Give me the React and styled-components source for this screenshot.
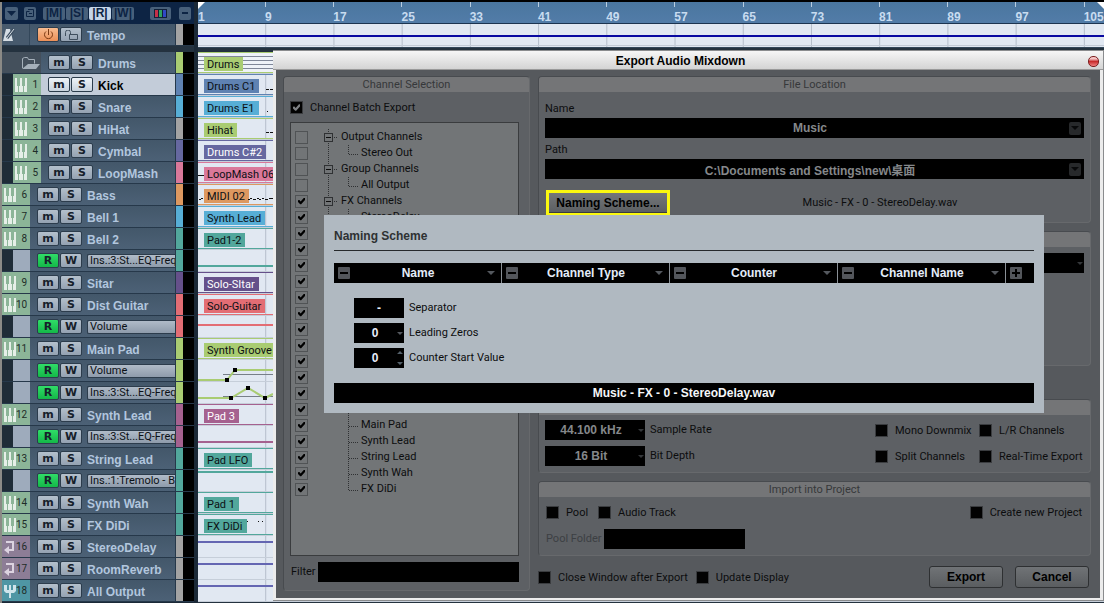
import React from "react";
import styled, { createGlobalStyle, css } from "styled-components";

const GREEN = "#a9cc72";
const BLUE = "#5f82b2";
const SKY = "#57aed6";
const GREY = "#a3a3a3";
const VIOLET = "#6668a0";
const PINK = "#d9789a";
const ORANGE = "#dd9860";
const TEAL = "#52a79c";
const PURPLE = "#65508a";
const RED = "#e36d74";
const MAUVE = "#a5618f";
const LINE = "#6466b2";

const tracks = [
  { kind: "folder", name: "Drums", color: GREEN, clip: "Drums", striped: true },
  { num: 1, name: "Kick", color: BLUE, clip: "Drums C1", indent: true, selected: true, notes: "M68 15.500h3M72 15.500h3" },
  { num: 2, name: "Snare", color: SKY, clip: "Drums E1", indent: true, notes: "M69 15.500h1" },
  { num: 3, name: "HiHat", color: GREY, tint: GREEN, clip: "Hihat", indent: true, notes: "M68 14.500h3M72 14.500h3" },
  { num: 4, name: "Cymbal", color: VIOLET, clip: "Drums C#2", indent: true, light: true },
  { num: 5, name: "LoopMash", color: PINK, clip: "LoopMash 06", indent: true, notes: "M0 13.500h6" },
  {
    num: 6,
    name: "Bass",
    color: ORANGE,
    clip: "MIDI 02",
    notes: "M1 15.500h2M3 14.500h2M50 15.500h2M52 14.500h2M55 15.500h3M59 14.500h2M61 15.500h2M64 14.500h2M67 15.500h3M71 14.500h4",
  },
  { num: 7, name: "Bell 1", color: SKY, clip: "Synth Lead" },
  { num: 8, name: "Bell 2", color: TEAL, clip: "Pad1-2" },
  { kind: "auto", param: "Ins.:3:St...EQ-Freq", color: TEAL, curve: "M0 16H906" },
  { num: 9, name: "Sitar", color: PURPLE, clip: "Solo-SItar", light: true },
  { num: 10, name: "Dist Guitar", color: RED, clip: "Solo-Guitar" },
  { kind: "auto", param: "Volume", color: RED, curve: "M0 9H906" },
  { num: 11, name: "Main Pad", color: GREEN, clip: "Synth Groove" },
  {
    kind: "auto",
    param: "Volume",
    color: GREEN,
    base: "M25 14.500H75",
    curve: "M0 20H29L37 10H75",
    points: [[29, 20], [37, 10]],
  },
  {
    kind: "auto",
    param: "Ins.:3:St...EQ-Freq",
    color: GREEN,
    base: "M25 14.500H75",
    curve: "M0 16H33L50 6L67 16L75 12",
    points: [[33, 16], [50, 6], [67, 16]],
  },
  { num: 12, name: "Synth Lead", color: MAUVE, clip: "Pad 3", light: true },
  { kind: "auto", param: "Ins.:3:St...EQ-Freq", color: MAUVE, curve: "M0 16H906" },
  { num: 13, name: "String Lead", color: TEAL, clip: "Pad LFO" },
  { kind: "auto", param: "Ins.:1:Tremolo - B", color: TEAL, curve: "M0 2H906" },
  { num: 14, name: "Synth Wah", color: TEAL, clip: "Pad 1" },
  { num: 15, name: "FX DiDi", color: TEAL, clip: "FX DiDi", notes: "M49 7.500h1M60 7.500h1M64 7.500h1" },
  { kind: "fx", num: 16, name: "StereoDelay", color: GREY, line: LINE, curve: "M0 6H906" },
  { kind: "fx", num: 17, name: "RoomReverb", color: GREY, line: LINE, curve: "M0 6H906" },
  { kind: "out", num: 18, name: "All Output", color: GREY, line: LINE, curve: "M0 6H906" },
];

const channels = [
  { name: "Output Channels", group: true, first: true },
  { name: "Stereo Out", last: true, trunk: true },
  { name: "Group Channels", group: true },
  { name: "All Output", last: true, trunk: true },
  { name: "FX Channels", group: true, on: true },
  { name: "StereoDelay", on: true, trunk: true },
  { name: "RoomReverb", on: true, last: true, trunk: true },
  { name: "Instrument Tracks", group: true, on: true, end: true },
  { name: "Kick", on: true },
  { name: "Snare", on: true },
  { name: "HiHat", on: true },
  { name: "Cymbal", on: true },
  { name: "LoopMash", on: true },
  { name: "Bass", on: true },
  { name: "Bell 1", on: true },
  { name: "Bell 2", on: true },
  { name: "Sitar", on: true },
  { name: "Dist Guitar", on: true },
  { name: "Main Pad", on: true },
  { name: "Synth Lead", on: true },
  { name: "String Lead", on: true },
  { name: "Synth Wah", on: true },
  { name: "FX DiDi", on: true, last: true },
];

const bars = [1, 9, 17, 25, 33, 41, 49, 57, 65, 73, 81, 89, 97, 105];
const nameParts = ["Name", "Channel Type", "Counter", "Channel Name"];

/* ---------- icons ---------- */

const KeysIcon = () => (
  <svg width="12" height="14" viewBox="0 0 12 14" fill="#e6efe8">
    <path d="M0 0h2v8h1v6H0zM5 0h2v8h1v6H4V8h1zM10 0h2v14H9V8h1z" />
  </svg>
);

const ReturnIcon = () => (
  <svg width="12" height="14" viewBox="0 0 12 14" fill="none" stroke="#dcd3e0" strokeWidth="2">
    <path d="M2 2h7v8H4" />
    <path d="M5 6v8L0 10z" fill="#dcd3e0" stroke="none" />
  </svg>
);

const OutIcon = () => (
  <svg width="12" height="14" viewBox="0 0 12 14" fill="#cfe4ea">
    <path d="M0 1h3v5h2V1h2v5h2V1h3v6l-2 2H7v5H5V9H2L0 7z" />
  </svg>
);

const FolderIcon = () => (
  <svg width="19" height="14" viewBox="0 0 19 14">
    <path d="M1.500 12V2.500l2-1h3l1 2h6v4" fill="none" stroke="#a5b0ba" />
    <path d="M1 13l6-5h12l-4 5z" fill="#a5b0ba" />
  </svg>
);

const MetronomeIcon = () => (
  <svg width="13" height="14" viewBox="0 0 13 14">
    <path d="M4 1h4l3 12H1z" fill="#d5dde4" />
    <path d="M5 10L12 1" stroke="#3c4e60" strokeWidth="3" />
    <path d="M5 10L12 1" stroke="#d5dde4" />
  </svg>
);

const PowerIcon = () => (
  <svg width="11" height="11" viewBox="0 0 11 11" fill="none" stroke="#7c3a14">
    <path d="M3 2.500a4 4 0 1 0 5 0M5.500 0v6" />
  </svg>
);

const LockIcon = () => (
  <svg width="15" height="10" viewBox="0 0 15 10" fill="none" stroke="#3f4e5d">
    <path d="M1.500 6V2.500a2 2 0 0 1 5 0V4.500M5.500 4.500h8v5h-8z" />
  </svg>
);

const Caret = ({ w = 8, h = 4, color = "#54585e" }) => (
  <svg width={w} height={h} viewBox="0 0 8 4" preserveAspectRatio="none">
    <path d="M0 0h8L4 4z" fill={color} />
  </svg>
);

const SignIcon = ({ plus }) => (
  <svg width="12" height="12" viewBox="0 0 12 12">
    <rect width="12" height="12" rx="1" fill="#53565b" />
    <path d={plus ? "M2 6h8M6 2v8" : "M2 6h8"} stroke="#000" strokeWidth="2" />
  </svg>
);

function Branch({ item }) {
  const width = item.group ? 19 : 39;
  return (
    <svg width={width} height="16" fill="none" stroke="#2f3133" strokeDasharray="1 1">
      {item.group && <path d={item.end ? "M6.500 0V4" : "M6.500 0V16"} />}
      {item.trunk && <path d="M6.500 0V16" />}
      {item.group && (
        <g strokeDasharray="none">
          <rect x="2.500" y="4.500" width="8" height="8" fill="#727577" />
          <path d="M4 8.500h5" stroke="#0d0d0d" />
          <path d="M12 8.500h4" strokeDasharray="1 1" />
        </g>
      )}
      {!item.group && <path d={item.last ? "M26.500 0V9M27 9.500h9" : "M26.500 0V16M27 9.500h9"} />}
    </svg>
  );
}

/* ---------- parts ---------- */

function Check({ label, checked, dark, bare }) {
  return (
    <CheckLabel>
      <CheckBox type="checkbox" defaultChecked={checked} $dark={dark} aria-label={bare ? label : undefined} />
      {!bare && label}
    </CheckLabel>
  );
}

function Track({ track }) {
  const { kind, num, name, param, color, indent, selected } = track;
  const auto = kind === "auto";
  return (
    <TrackRow>
      {(indent || auto) && <Indent />}
      {kind === "folder" && (
        <FolderCell>
          <FolderIcon />
        </FolderCell>
      )}
      {auto && <AutoCell />}
      {num && (
        <NumberCell $kind={kind}>
          {kind === "fx" ? <ReturnIcon /> : kind === "out" ? <OutIcon /> : <KeysIcon />}
          {num}
        </NumberCell>
      )}
      <TrackBody $selected={selected}>
        <TrackButton $tone={auto ? "green" : selected ? "bright" : ""} aria-label={auto ? "Read" : "Mute"}>
          {auto ? "R" : "m"}
        </TrackButton>
        <TrackButton $tone={selected ? "bright" : ""} aria-label={auto ? "Write" : "Solo"}>
          {auto ? "W" : "S"}
        </TrackButton>
        {auto ? <ParamButton>{param}</ParamButton> : <TrackName $selected={selected}>{name}</TrackName>}
      </TrackBody>
      <ColorStrip $color={color} />
      <Meter />
    </TrackRow>
  );
}

function Lane({ track }) {
  const { clip, color, tint, light, notes, curve, base, points, line, striped } = track;
  return (
    <LaneRow>
      {clip && (
        <Clip $color={tint || color} $striped={striped}>
          <ClipLabel $color={tint || color} $light={light}>
            {clip}
          </ClipLabel>
        </Clip>
      )}
      {(notes || curve) && (
        <LaneDrawing height="22" fill="none">
          {notes && <path d={notes} stroke="#111" />}
          {base && <path d={base} stroke="#777f88" />}
          {curve && <path d={curve} stroke={line || color} strokeWidth="2" />}
          {points && points.map(([x, y]) => <rect key={x} x={x - 2} y={y - 2} width="4" height="4" fill="#000" />)}
        </LaneDrawing>
      )}
    </LaneRow>
  );
}

function TrackList() {
  return (
    <TrackColumn>
      <Toolbar>
        <ToolButton $w={13} aria-label="Presets">
          <Caret w={9} h={5} color="#0d2444" />
        </ToolButton>
        <ToolButton $w={12} aria-label="Divide">
          <svg width="8" height="8" fill="none" stroke="#0d2444">
            <path d="M2 .5h5.500v7H.5v-5h3M3 4.500h3" />
          </svg>
        </ToolButton>
        <ModeGroup>
          <ToolButton $w={22}>|M|</ToolButton>
          <ToolButton $w={22}>|S|</ToolButton>
          <ToolButton $w={22} $on>|R|</ToolButton>
          <ToolButton $w={22}>|W|</ToolButton>
        </ModeGroup>
        <ToolButton $w={21} $last aria-label="Colors">
          <svg width="13" height="9">
            <path d="M0 0h13v9H0z" fill="#102038" />
            <path d="M1 1h3v7H1z" fill="#c43048" />
            <path d="M5 1h3v7H5z" fill="#30a060" />
            <path d="M9 1h3v7H9z" fill="#3048c4" />
          </svg>
        </ToolButton>
        <ToolButton $w={12} aria-label="Collapse">
          <svg width="6" height="2">
            <path d="M0 0h6v2H0z" fill="#0d2444" />
          </svg>
        </ToolButton>
      </Toolbar>
      <TrackRow>
        <TempoCell>
          <MetronomeIcon />
        </TempoCell>
        <TrackBody>
          <TrackButton $tone="orange" aria-label="Activate">
            <PowerIcon />
          </TrackButton>
          <TrackButton aria-label="Lock">
            <LockIcon />
          </TrackButton>
          <TrackName>Tempo</TrackName>
        </TrackBody>
        <ColorStrip $color={GREY} />
        <Meter />
      </TrackRow>
      <Divider />
      {tracks.map((track, i) => (
        <Track key={i} track={track} />
      ))}
    </TrackColumn>
  );
}

function Timeline() {
  return (
    <TimelineColumn>
      <Ruler>
        {bars.map((bar) => (
          <Bar key={bar}>{bar}</Bar>
        ))}
        <Locator />
        <Locator $right />
      </Ruler>
      <TempoLane>
        <TempoLine />
      </TempoLane>
      <LaneDivider />
      <Lanes>
        {tracks.map((track, i) => (
          <Lane key={i} track={track} />
        ))}
      </Lanes>
    </TimelineColumn>
  );
}

function NamingScheme() {
  return (
    <Popup>
      <PopupTitle>Naming Scheme</PopupTitle>
      <Parts>
        {nameParts.map((part) => (
          <Part key={part}>
            <SignButton aria-label={"Remove " + part}>
              <SignIcon />
            </SignButton>
            <PartSelect aria-label="Attribute" defaultValue={part}>
              <option>{part}</option>
            </PartSelect>
            <Caret />
          </Part>
        ))}
        <SignButton aria-label="Add attribute">
          <SignIcon plus />
        </SignButton>
      </Parts>
      <Settings>
        <SettingRow>
          <SmallField>
            <BlackInput id="separator" $bright defaultValue="-" />
          </SmallField>
          <label htmlFor="separator">Separator</label>
        </SettingRow>
        <SettingRow>
          <SmallField>
            <BlackSelect id="zeros" $bright defaultValue="0">
              <option>0</option>
            </BlackSelect>
            <Arrows>
              <Caret w={6} h={3} />
            </Arrows>
          </SmallField>
          <label htmlFor="zeros">Leading Zeros</label>
        </SettingRow>
        <SettingRow>
          <SmallField>
            <BlackInput id="start" $bright $room defaultValue="0" />
            <Arrows>
              <svg width="6" height="14" fill="#54606a">
                <path d="M0 3h6L3 0zM0 11h6L3 14z" />
              </svg>
            </Arrows>
          </SmallField>
          <label htmlFor="start">Counter Start Value</label>
        </SettingRow>
      </Settings>
      <Preview>Music - FX - 0 - StereoDelay.wav</Preview>
    </Popup>
  );
}

function ExportDialog() {
  return (
    <Dialog role="dialog" aria-label="Export Audio Mixdown">
      <TitleBar>
        Export Audio Mixdown
        <CloseButton aria-label="Close" />
      </TitleBar>
      <DialogBody>
        <ChannelPanel>
          <PanelHeader>Channel Selection</PanelHeader>
          <ChannelContent>
            <Check label="Channel Batch Export" checked dark />
            <ChannelList>
              {channels.map((item) => (
                <ChannelRow key={item.name + (item.last ? "-last" : "")}>
                  <Check label={item.name} checked={item.on} bare />
                  <ChannelName>
                    <Branch item={item} />
                    {item.name}
                  </ChannelName>
                </ChannelRow>
              ))}
            </ChannelList>
            <FilterRow>
              <label htmlFor="filter">Filter</label>
              <BlackInput id="filter" />
            </FilterRow>
          </ChannelContent>
        </ChannelPanel>
        <RightSide>
          <Panel>
            <PanelHeader>File Location</PanelHeader>
            <FileContent>
              <FieldLabel htmlFor="name">Name</FieldLabel>
              <Combo>
                <BlackInput id="name" defaultValue="Music" />
                <ComboButton aria-label="Name options">
                  <Caret color="#08090a" />
                </ComboButton>
              </Combo>
              <FieldLabel htmlFor="path">Path</FieldLabel>
              <Combo>
                <BlackInput id="path" defaultValue={"C:\\Documents and Settings\\new\\桌面"} />
                <ComboButton aria-label="Path options">
                  <Caret color="#08090a" />
                </ComboButton>
              </Combo>
              <SchemeRow>
                <Highlight>
                  <SchemeButton>Naming Scheme...</SchemeButton>
                </Highlight>
                <SchemeResult>Music - FX - 0 - StereoDelay.wav</SchemeResult>
              </SchemeRow>
            </FileContent>
          </Panel>
          <FormatPanel>
            <PanelHeader>File Format</PanelHeader>
            <FormatContent>
              <Combo>
                <BlackSelect aria-label="File Format" defaultValue="Wave File">
                  <option>Wave File</option>
                </BlackSelect>
                <Arrows>
                  <Caret w={6} h={3} color="#34373a" />
                </Arrows>
              </Combo>
            </FormatContent>
          </FormatPanel>
          <Panel>
            <PanelHeader>Audio Engine Output</PanelHeader>
            <EngineContent>
              <EngineFields>
                <EngineRow>
                  <MediumField>
                    <BlackSelect id="rate" defaultValue="44.100 kHz">
                      <option>44.100 kHz</option>
                    </BlackSelect>
                    <Arrows>
                      <Caret w={6} h={3} color="#34373a" />
                    </Arrows>
                  </MediumField>
                  <label htmlFor="rate">Sample Rate</label>
                </EngineRow>
                <EngineRow>
                  <MediumField>
                    <BlackSelect id="depth" defaultValue="16 Bit">
                      <option>16 Bit</option>
                    </BlackSelect>
                    <Arrows>
                      <Caret w={6} h={3} color="#34373a" />
                    </Arrows>
                  </MediumField>
                  <label htmlFor="depth">Bit Depth</label>
                </EngineRow>
              </EngineFields>
              <EngineChecks>
                <Check label="Mono Downmix" dark />
                <Check label="L/R Channels" dark />
                <Check label="Split Channels" dark />
                <Check label="Real-Time Export" dark />
              </EngineChecks>
            </EngineContent>
          </Panel>
          <Panel $top={8}>
            <PanelHeader>Import into Project</PanelHeader>
            <ImportContent>
              <ImportChecks>
                <Check label="Pool" dark />
                <Check label="Audio Track" dark />
                <PushRight>
                  <Check label="Create new Project" dark />
                </PushRight>
              </ImportChecks>
              <PoolRow>
                <PoolLabel htmlFor="pool">Pool Folder</PoolLabel>
                <PoolField>
                  <BlackInput id="pool" disabled />
                </PoolField>
              </PoolRow>
            </ImportContent>
          </Panel>
          <Footer>
            <Check label="Close Window after Export" dark />
            <Check label="Update Display" dark />
            <FooterButtons>
              <FooterButton>Export</FooterButton>
              <FooterButton>Cancel</FooterButton>
            </FooterButtons>
          </Footer>
        </RightSide>
      </DialogBody>
      <NamingScheme />
    </Dialog>
  );
}

function App() {
  return (
    <Screen>
      <GlobalStyle />
      <TrackList />
      <Timeline />
      <ExportDialog />
    </Screen>
  );
}

export default App;

/* ---------- styles ---------- */

const GlobalStyle = createGlobalStyle`
  * {
    box-sizing: border-box;
  }
  body {
    margin: 0;
    background: #24323f;
    font-family: Roboto, "Liberation Sans", "Noto Sans CJK SC", sans-serif;
    font-size: 11px;
    line-height: 16px;
    color: #0c0d0e;
  }
  button, input, select {
    margin: 0;
    padding: 0;
    border: none;
    font: inherit;
    color: inherit;
  }
  svg {
    display: block;
    flex-shrink: 0;
  }
`;

const bold = css`
  font-family: "Liberation Sans", "Noto Sans CJK SC", sans-serif;
  font-size: 12px;
  font-weight: 700;
`;

const Screen = styled.div`
  position: relative;
  display: flex;
  min-height: 100vh;
  border-top: 2px solid #000;
  overflow: hidden;
`;

const TrackColumn = styled.div`
  width: 197px;
  flex-shrink: 0;
  padding-right: 3px;
  border-left: 2px solid #8b8a86;
  background: #1b2937;
`;

const Toolbar = styled.div`
  height: 22px;
  padding: 0 3px;
  display: flex;
  align-items: center;
  gap: 6px;
  background: #0d2444;
`;

const ModeGroup = styled.div`
  flex: 1;
  padding-left: 1px;
  display: flex;
  gap: 1px;
`;

const ToolButton = styled.button`
  width: ${(props) => props.$w}px;
  height: 13px;
  margin-right: ${(props) => (props.$last ? 2 : 0)}px;
  display: flex;
  align-items: center;
  justify-content: center;
  border-radius: 2px;
  background: ${(props) => (props.$on ? "#c5d6e8" : "#48607a")};
  color: #0d2444;
  ${bold}
  line-height: 13px;
`;

const TrackRow = styled.div`
  height: 22px;
  display: flex;
  border-bottom: 1px solid #26384a;
  background: #000;
`;

const Divider = styled.div`
  height: 6px;
  background: #24323f;
`;

const Indent = styled.div`
  width: 11px;
  background: #1f2c37;
`;

const FolderCell = styled.div`
  width: 39px;
  padding-right: 1px;
  display: flex;
  align-items: center;
  justify-content: flex-end;
  background: #44505c;
`;

const AutoCell = styled.div`
  width: 17px;
  background: #9eabbc;
`;

const TempoCell = styled.div`
  width: 28px;
  display: flex;
  align-items: center;
  border-right: 1px solid #33475a;
  background: #475a6d;
`;

const cellColors = { fx: "#8d7d96", out: "#4f96a4" };

const NumberCell = styled.div`
  width: 28px;
  padding: 0 3px 0 2px;
  display: flex;
  align-items: center;
  justify-content: space-between;
  background: ${(props) => cellColors[props.$kind] || "#8cb598"};
  color: #1e2c28;
  font-size: 10px;
`;

const TrackBody = styled.div`
  flex: 1;
  min-width: 0;
  padding-left: 7px;
  display: flex;
  align-items: center;
  gap: 1px;
  background: ${(props) => (props.$selected ? "#c3ccd9" : "linear-gradient(#43576a, #4c6176)")};
`;

const tones = {
  green: "linear-gradient(#30dc68, #14b848)",
  bright: "linear-gradient(#eef3f8, #c8d2de)",
  orange: "linear-gradient(#f8bc90, #ec9058)",
};

const TrackButton = styled.button`
  width: 22px;
  height: 15px;
  flex-shrink: 0;
  display: flex;
  align-items: center;
  justify-content: center;
  border: 1px solid #2c3c4c;
  border-radius: 2px;
  background: ${(props) => tones[props.$tone] || "linear-gradient(#b4c0cc, #94a2b2)"};
  color: #16202a;
  font-family: "DejaVu Sans", sans-serif;
  font-size: 11px;
  font-weight: 700;
  line-height: 13px;
`;

const TrackName = styled.span`
  padding: 2px 0 0 4px;
  color: ${(props) => (props.$selected ? "#000" : "#b2c6de")};
  white-space: nowrap;
  ${bold}
`;

const ParamButton = styled.button`
  flex: 1;
  min-width: 0;
  height: 14px;
  margin-left: 4px;
  padding-left: 2px;
  overflow: hidden;
  border: 1px solid #2c3c4c;
  border-right: none;
  border-radius: 2px 0 0 2px;
  background: linear-gradient(#b0bbc8, #8e9bab);
  color: #0c1116;
  line-height: 12px;
  text-align: left;
  white-space: nowrap;
`;

const ColorStrip = styled.div`
  width: 8px;
  border-left: 1px solid #26384a;
  background: ${(props) => props.$color};
`;

const Meter = styled.div`
  width: 11px;
  background: #000;
`;

const TimelineColumn = styled.div`
  flex: 1;
  min-width: 0;
  border-left: 1px solid #1b2937;
`;

const Ruler = styled.div`
  position: relative;
  height: 22px;
  display: flex;
  overflow: hidden;
  border-bottom: 1px solid #1c3450;
  background: linear-gradient(#4a769f, #527ca8);
`;

const Bar = styled.div`
  flex: 0 0 7.53%;
  padding-top: 7px;
  color: #c8dcf0;
  background: linear-gradient(#b8cce0, #b8cce0) 0 0 / 1px 5px no-repeat;
  ${bold}

  &:first-child {
    flex-basis: 7.4%;
  }
`;

const Locator = styled.div`
  position: absolute;
  top: 0;
  ${(props) => (props.$right ? "right: 0;" : "left: 0;")}
  width: 7px;
  height: 7px;
  background: #fff;
  clip-path: ${(props) => (props.$right ? "polygon(0 0, 100% 0, 100% 100%)" : "polygon(0 0, 100% 0, 0 100%)")};
`;

/* grid lines share the ruler's bar width */
const grid = css`
  background: linear-gradient(to right, #b4bdca 1px, transparent 1px) -1px 0 / 7.53% 100%, #e1e8f2;
`;

const TempoLane = styled.div`
  height: 24px;
  padding-top: 11px;
  border-bottom: 1px solid #33475a;
  ${grid}
`;

const TempoLine = styled.div`
  height: 11px;
  border-top: 2px solid #0808a0;
  border-bottom: 1px solid #c2cad6;
`;

const LaneDivider = styled.div`
  height: 4px;
  background: #24323f;
`;

const Lanes = styled.div`
  ${grid}
`;

const LaneRow = styled.div`
  position: relative;
  height: 22px;
  border-bottom: 1px solid #c6ced9;
`;

const Clip = styled.div`
  height: 21px;
  padding: 4px 0 0 6px;
  border-top: 1px solid ${(props) => props.$color};
  border-bottom: 1px solid ${(props) => props.$color};
  background: ${(props) =>
    props.$striped ? "repeating-linear-gradient(#eef2f8 0, #eef2f8 3px, #7f8798 3px, #7f8798 4px)" : "transparent"};
`;

const ClipLabel = styled.span`
  display: inline-block;
  height: 14px;
  padding: 0 4px 0 3px;
  background: ${(props) => props.$color};
  color: ${(props) => (props.$light ? "#fff" : "#0c1014")};
  font-size: 11px;
  line-height: 15px;
  vertical-align: top;
  white-space: nowrap;
`;

const LaneDrawing = styled.svg`
  position: absolute;
  top: 0;
  left: 0;
  width: 100%;
`;

const Dialog = styled.section`
  position: absolute;
  top: 48px;
  left: 273px;
  right: 0;
  border: 1px solid #8a8c8e;
  border-left: none;
  background: #ececec;
`;

const TitleBar = styled.header`
  position: relative;
  height: 19px;
  padding: 2px 18px 0 3px;
  display: flex;
  align-items: center;
  justify-content: center;
  border-bottom: 1px solid #9a9a9a;
  background: linear-gradient(#f6f6f6, #d4d4d4);
  color: #000;
  ${bold}
`;

const CloseButton = styled.button`
  position: absolute;
  right: 4px;
  width: 11px;
  height: 11px;
  border: 1px solid #7c2020;
  border-radius: 5px;
  background: linear-gradient(#f4c4c4 20%, #c82c2c 50%, #f08080);
`;

const DialogBody = styled.div`
  margin: 0 3px 2px;
  padding: 6px 9px 7px 7px;
  display: flex;
  gap: 8px;
  background: #56595d;
`;

const Panel = styled.section`
  margin-top: ${(props) => props.$top || 0}px;
  border: 1px solid;
  border-color: #484b4f #67696c #67696c #484b4f;
  border-radius: 4px;
  background: #5d6064;
`;

const ChannelPanel = styled(Panel)`
  width: 247px;
  flex-shrink: 0;
  display: flex;
  flex-direction: column;
`;

const FormatPanel = styled(Panel)`
  min-height: 135px;
  margin: 8px 0 33px;
`;

const PanelHeader = styled.h2`
  height: 15px;
  margin: 0;
  border-radius: 3px 3px 0 0;
  background: #747577;
  color: #36383a;
  font-size: 11px;
  font-weight: 400;
  line-height: 16px;
  text-align: center;
`;

const ChannelContent = styled.div`
  flex: 1;
  padding: 9px 10px 8px 6px;
  display: flex;
  flex-direction: column;
`;

const CheckLabel = styled.label`
  height: 13px;
  display: flex;
  align-items: center;
  gap: 7px;
  line-height: 13px;
  white-space: nowrap;
`;

const CheckBox = styled.input`
  appearance: none;
  width: 13px;
  height: 13px;
  border: 1px solid ${(props) => (props.$dark ? "#3a3c3f" : "#505355")};
  background: ${(props) => (props.$dark ? "#020202" : "transparent")};

  &:checked::before {
    content: "";
    display: block;
    width: 7px;
    height: 7px;
    margin: 2px;
    background: ${(props) => (props.$dark ? "#7d8083" : "#000")};
    clip-path: polygon(0 40%, 20% 35%, 38% 56%, 85% 5%, 100% 5%, 100% 35%, 45% 95%, 32% 95%, 0 65%);
  }
`;

const ChannelList = styled.ul`
  flex: 1;
  margin: 8px 0 6px;
  padding: 6px 4px;
  border: 1px solid #3a3c3e;
  background: #727577;
  list-style: none;
`;

const ChannelRow = styled.li`
  height: 16px;
  display: flex;
  align-items: center;
  gap: 14px;
`;

const ChannelName = styled.span`
  display: flex;
  align-items: center;
  line-height: 18px;
`;

const FilterRow = styled.div`
  display: flex;
  align-items: center;
  gap: 2px;
  padding-left: 1px;
`;

const field = css`
  flex: 1;
  width: 100%;
  min-width: 0;
  height: 20px;
  border-radius: 0;
  background: #000;
  color: ${(props) => (props.$bright ? "#e8eef8" : "#85888b")};
  text-align: center;
  ${bold}
`;

const BlackInput = styled.input`
  ${field}
  padding-right: ${(props) => (props.$room ? 8 : 0)}px;
`;

const BlackSelect = styled.select`
  ${field}
  appearance: none;
  padding-right: 8px;
`;

const RightSide = styled.div`
  flex: 1;
  min-width: 0;
`;

const FileContent = styled.div`
  padding: 9px 6px 6px;
`;

const FieldLabel = styled.label`
  display: block;
  margin-bottom: 1px;
`;

const Combo = styled.div`
  position: relative;
  height: 20px;
  margin-bottom: 4px;
  padding-left: 6px;
  display: flex;
  align-items: center;
  background: #000;
`;

const ComboButton = styled.button`
  width: 12px;
  height: 13px;
  margin-right: 3px;
  display: flex;
  align-items: center;
  justify-content: center;
  border-radius: 2px;
  background: #27292b;
`;

const SchemeRow = styled.div`
  margin-top: 11px;
  padding-left: 1px;
  display: flex;
  align-items: center;
`;

const Highlight = styled.div`
  width: 124px;
  height: 26px;
  border: 3px solid #fbf810;
  background: #3a3c3f;
`;

const SchemeButton = styled.button`
  width: 100%;
  height: 19px;
  background: linear-gradient(#74777a, #5c5f62);
  color: #000;
  ${bold}
`;

const SchemeResult = styled.span`
  flex: 1;
  padding-left: 6px;
  text-align: center;
`;

const FormatContent = styled.div`
  padding: 6px 6px 0;
`;

const EngineContent = styled.div`
  padding: 5px 6px 6px;
  display: flex;
  justify-content: space-between;
`;

const EngineFields = styled.div`
  display: flex;
  flex-direction: column;
  gap: 6px;
`;

const EngineRow = styled.div`
  display: flex;
  align-items: center;
  gap: 5px;
`;

const MediumField = styled.div`
  position: relative;
  width: 100px;
  display: flex;
`;

const Arrows = styled.span`
  position: absolute;
  right: 1px;
  top: 0;
  bottom: 0;
  display: flex;
  align-items: center;
  pointer-events: none;
`;

const EngineChecks = styled.div`
  display: grid;
  grid-template-columns: 104px 105px;
  row-gap: 6px;
  align-items: center;
`;

const ImportContent = styled.div`
  padding: 9px 7px 6px;
`;

const ImportChecks = styled.div`
  display: flex;
  gap: 10px;
`;

const PushRight = styled.div`
  margin-left: auto;
  padding-right: 1px;
`;

const PoolRow = styled.div`
  margin-top: 10px;
  display: flex;
  align-items: center;
`;

const PoolLabel = styled.label`
  width: 58px;
  color: #3c3f43;
`;

const PoolField = styled.div`
  width: 141px;
  display: flex;
`;

const Footer = styled.footer`
  margin-top: 10px;
  padding-bottom: 3px;
  display: flex;
  align-items: center;
  gap: 8px;
`;

const FooterButtons = styled.div`
  margin-left: auto;
  padding-right: 2px;
  display: flex;
  gap: 12px;
`;

const FooterButton = styled.button`
  width: 74px;
  height: 22px;
  border: 1px solid #2e3032;
  border-radius: 3px;
  background: linear-gradient(#707376, #5a5d60);
  color: #000;
  ${bold}
`;

const Popup = styled.section`
  position: absolute;
  top: 164px;
  left: 51px;
  right: 59px;
  padding: 10px;
  background: #b0b9c1;
`;

const PopupTitle = styled.h3`
  height: 26px;
  margin: 0 0 12px;
  padding-top: 3px;
  border-bottom: 1px solid #26292c;
  color: #2e3133;
  ${bold}
`;

const Parts = styled.div`
  height: 20px;
  padding-right: 8px;
  display: flex;
  align-items: center;
  background: #000;
`;

const Part = styled.div`
  flex: 1;
  height: 20px;
  padding-right: 6px;
  display: flex;
  align-items: center;
  border-right: 1px solid #8a9096;
`;

const SignButton = styled.button`
  padding: 0 4px;
  background: transparent;
`;

const PartSelect = styled.select`
  appearance: none;
  flex: 1;
  min-width: 0;
  padding-right: 5px;
  background: transparent;
  color: #e4ecf8;
  text-align: center;
  ${bold}
`;

const Settings = styled.div`
  padding: 15px 20px;
  display: flex;
  flex-direction: column;
  gap: 5px;
`;

const SettingRow = styled.div`
  display: flex;
  align-items: center;
  gap: 5px;
`;

const SmallField = styled.div`
  position: relative;
  width: 50px;
  display: flex;
`;

const Preview = styled.output`
  display: block;
  height: 20px;
  background: #000;
  color: #f4f6f8;
  line-height: 20px;
  text-align: center;
  ${bold}
`;
